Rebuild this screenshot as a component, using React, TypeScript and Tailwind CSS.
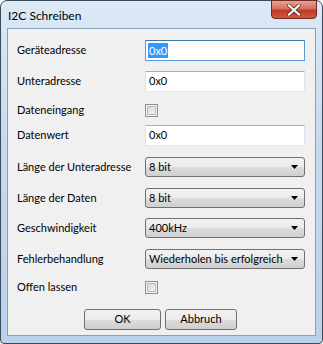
import React from 'react';

const font = { fontFamily: 'Lato, "Segoe UI", sans-serif' };

function TextBox(props: { value: string; focused?: boolean }) {
  const border = props.focused
    ? 'border-[#5a9ad8] border-t-[#3d7bad]'
    : 'border-[#e2e3ea] border-t-[#abadb3] border-b-[#e3e9ef]';
  return (
    <div className={'w-[160px] h-[21px] bg-white border flex items-center px-[2px] ' + border}>
      {props.focused ? (
        <span className="bg-[#3399ff] text-white leading-[15px] px-[1px]">{props.value}</span>
      ) : (
        <span className="px-[1px]">{props.value}</span>
      )}
    </div>
  );
}

function CheckBox() {
  return (
    <div className="w-[13px] h-[13px] border border-[#8e8f8f] bg-[#f4f4f4] p-[1px]">
      <div className="w-full h-full border border-[#b9babc] bg-gradient-to-br from-[#d6d6d6] to-[#f6f6f6]" />
    </div>
  );
}

function ComboBox(props: { value: string }) {
  return (
    <div className="w-[160px] h-[20px] rounded-[3px] border border-[#707070] bg-[linear-gradient(to_bottom,#f2f2f2_0%,#ebebeb_50%,#dddddd_50%,#cfcfcf_100%)] flex items-center pl-[3px] pr-[6px]">
      <span className="flex-1 whitespace-nowrap">{props.value}</span>
      <svg width="7" height="4" viewBox="0 0 7 4">
        <path d="M0 0 H7 L3.5 4 Z" fill="#000" />
      </svg>
    </div>
  );
}

function Button(props: { label: string; width: string }) {
  return (
    <div className={'h-[21px] rounded-[3px] border border-[#707070] bg-[linear-gradient(to_bottom,#f2f2f2_0%,#ebebeb_50%,#dddddd_50%,#cfcfcf_100%)] flex items-center justify-center ' + props.width}>
      {props.label}
    </div>
  );
}

function Row(props: { label: string; mt: string; h: string; children: React.ReactNode }) {
  return (
    <div className={'flex items-center pl-[9px] ' + props.mt + ' ' + props.h}>
      <div className="w-[128px] whitespace-nowrap">{props.label}</div>
      {props.children}
    </div>
  );
}

export default function App() {
  return (
    <div style={font} className="w-[323px] h-[344px] flex flex-col text-[11px] text-black">
      <div className="w-full h-full flex flex-col rounded-t-[7px] rounded-b-[4px] border border-[#3c4a5c] bg-[linear-gradient(to_bottom,#dce9f5_0%,#c7dbef_40%,#b9d1eb_100%)]">
        <div className="h-[27px] flex items-start">
          <div className="pl-[7px] pt-[6px] text-[12px] text-black flex-1">I2C Schreiben</div>
          <div className="w-[46px] h-[19px] mr-[5px] -mt-[1px] rounded-b-[4px] border border-[#6b2b25] bg-[linear-gradient(to_bottom,#e8a493_0%,#d46f5c_45%,#c13a26_55%,#d0563f_100%)] flex items-center justify-center">
            <svg width="14" height="12" viewBox="0 0 14 12">
              <path d="M2 1.5 L12 10.5 M12 1.5 L2 10.5" stroke="#4a1a14" strokeWidth="3.6" strokeLinecap="square" />
              <path d="M2 1.5 L12 10.5 M12 1.5 L2 10.5" stroke="#ffffff" strokeWidth="2.2" strokeLinecap="square" />
            </svg>
          </div>
        </div>
        <div className="flex-1 mx-[6px] mb-[7px] border border-[#84a0bd] border-t-[#8aa3bd] bg-[#f0f0f0] flex flex-col">
          <Row label="Geräteadresse" mt="mt-[11px]" h="h-[21px]">
            <TextBox value="0x0" focused />
          </Row>
          <Row label="Unteradresse" mt="mt-[10px]" h="h-[21px]">
            <TextBox value="0x0" />
          </Row>
          <Row label="Dateneingang" mt="mt-[12px]" h="h-[13px]">
            <CheckBox />
          </Row>
          <Row label="Datenwert" mt="mt-[8px]" h="h-[21px]">
            <TextBox value="0x0" />
          </Row>
          <Row label="Länge der Unteradresse" mt="mt-[11px]" h="h-[20px]">
            <ComboBox value="8 bit" />
          </Row>
          <Row label="Länge der Daten" mt="mt-[11px]" h="h-[20px]">
            <ComboBox value="8 bit" />
          </Row>
          <Row label="Geschwindigkeit" mt="mt-[10px]" h="h-[20px]">
            <ComboBox value="400kHz" />
          </Row>
          <Row label="Fehlerbehandlung" mt="mt-[11px]" h="h-[20px]">
            <ComboBox value="Wiederholen bis erfolgreich" />
          </Row>
          <Row label="Offen lassen" mt="mt-[12px]" h="h-[13px]">
            <CheckBox />
          </Row>
          <div className="mt-[15px] flex pl-[76px] gap-[4px]">
            <Button label="OK" width="w-[77px]" />
            <Button label="Abbruch" width="w-[72px]" />
          </div>
        </div>
      </div>
    </div>
  );
}
